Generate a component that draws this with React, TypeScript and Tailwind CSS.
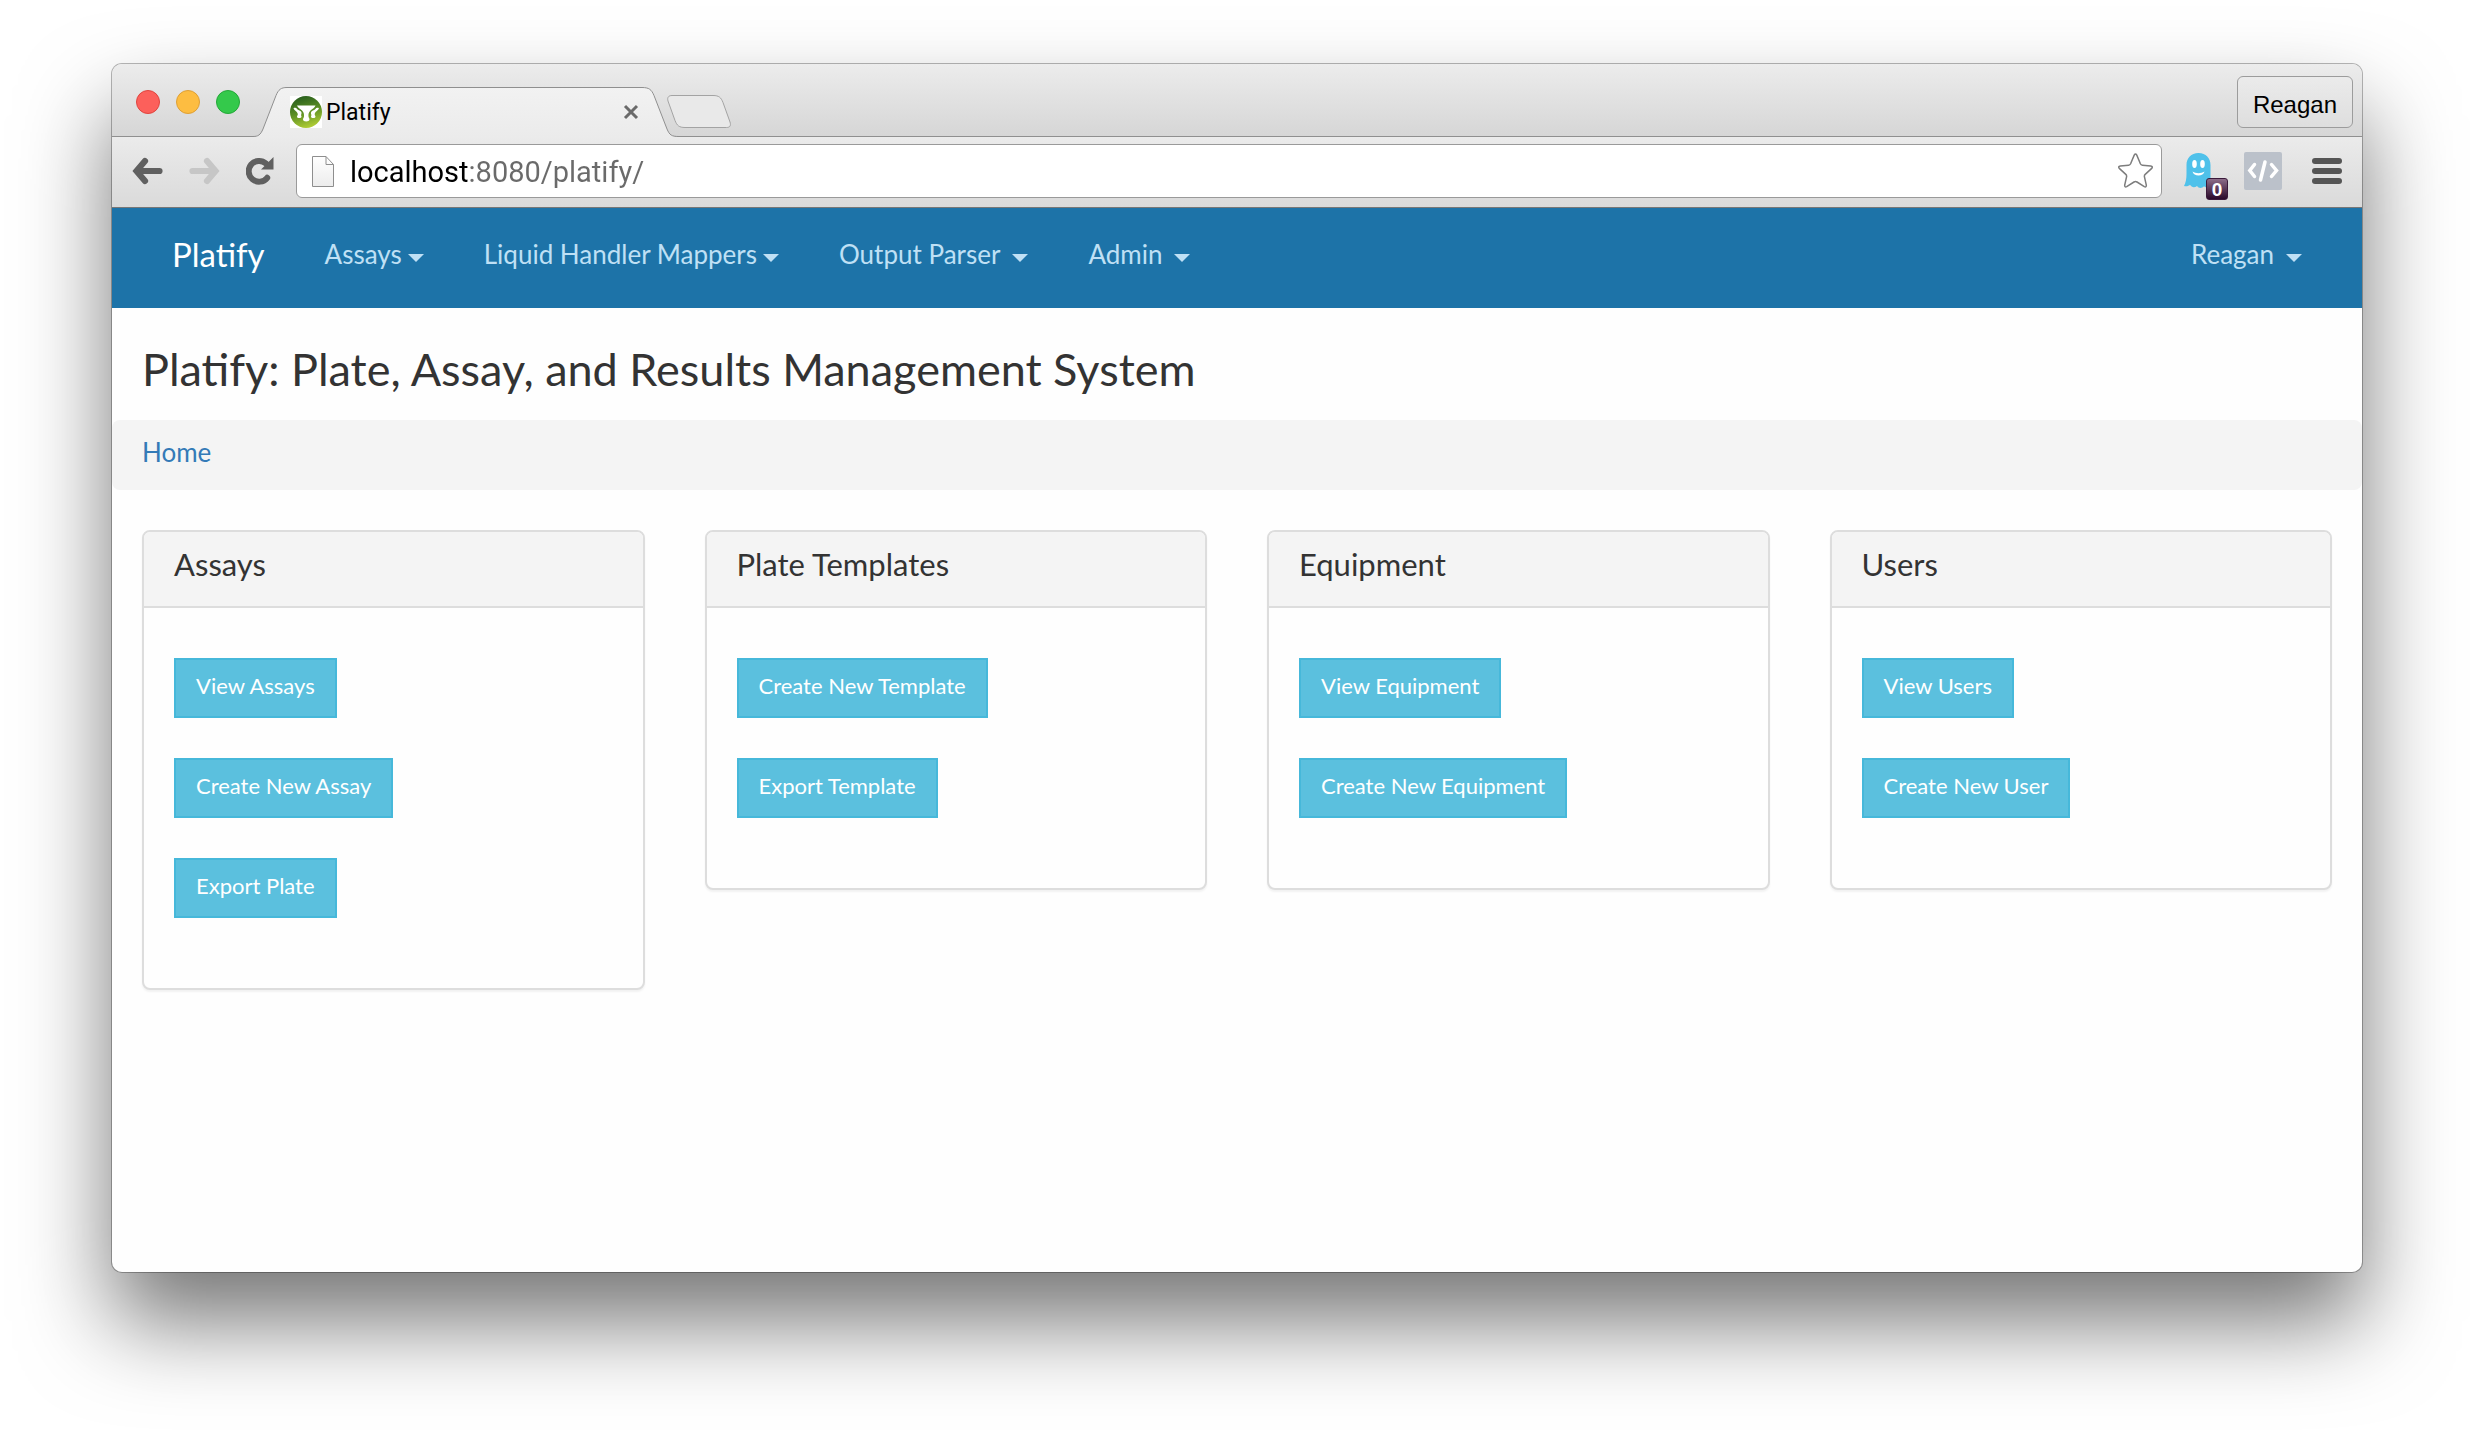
type NavItem = { label: string; tight?: boolean };

const navItems: NavItem[] = [
  { label: 'Assays', tight: true },
  { label: 'Liquid Handler Mappers', tight: true },
  { label: 'Output Parser' },
  { label: 'Admin' },
];

const panels = [
  { title: 'Assays', actions: ['View Assays', 'Create New Assay', 'Export Plate'] },
  { title: 'Plate Templates', actions: ['Create New Template', 'Export Template'] },
  { title: 'Equipment', actions: ['View Equipment', 'Create New Equipment'] },
  { title: 'Users', actions: ['View Users', 'Create New User'] },
];

function Favicon() {
  return (
    <svg width="32" height="32" viewBox="0 0 32 32" className="shrink-0 bg-white" aria-hidden="true">
      <defs>
        <linearGradient id="leaf" x1="0.3" y1="0" x2="0.6" y2="1">
          <stop offset="0" stopColor="#265c1d" />
          <stop offset="0.5" stopColor="#5c8f24" />
          <stop offset="1" stopColor="#b3cf35" />
        </linearGradient>
      </defs>
      <circle cx="16" cy="16" r="16" fill="url(#leaf)" />
      <g fill="#fff">
        <path d="M7 9.500h18.500c-.8 2.200-3 3.300-5 5-1.500 1.300-2.300 3.500-2 6 .2 1.500 1 1.700 1 3 0 1.200-1.500 2-3.250 2s-3.250-.8-3.250-2c0-1.300.8-1.500 1-3 .3-2.500-.5-4.700-2-6C10 12.800 7.800 11.700 7 9.500z" />
        <path d="M3.500 12.300c1.500-.8 2.800-.5 3.600.7.900 1.200 2.700 1.300 3.900 2.500.8.800.6 2 .2 3-.3 1 .3 1.500.3 2.200 0 .8-1 1.300-2.300 1.300S7 21.500 7 20.700c0-.9.9-1.200.8-2.400C7.500 15.500 4.500 15 3.500 12.300z" />
        <path d="M29 12.300c-1.500-.8-2.800-.5-3.600.7-.9 1.200-2.700 1.300-3.900 2.500-.8.800-.6 2-.2 3 .3 1-.3 1.500-.3 2.200 0 .8 1 1.300 2.300 1.300s2.200-.5 2.200-1.300c0-.9-.9-1.200-.8-2.400.3-2.800 3.300-3.300 4.200-6z" />
      </g>
    </svg>
  );
}

function Tab() {
  return (
    <div className="relative -mb-px h-[50px] w-[426px] shrink-0">
      <svg viewBox="0 0 426 50" className="absolute inset-0 h-full w-full" aria-hidden="true">
        <defs>
          <linearGradient id="tabFill" x1="0" y1="0" x2="0" y2="1">
            <stop offset="0" stopColor="#f2f2f2" />
            <stop offset="1" stopColor="#ebebeb" />
          </linearGradient>
        </defs>
        <path
          d="M0 50v-.5c5 0 7.500-1.500 10-7.500L23 8.500C25.500 2.500 28 .5 34 .5H389c7 0 9.500 2 12 8L414 42c2.500 6 4.500 7.500 12 7.500v.5z"
          fill="url(#tabFill)"
        />
        <path
          d="M0 49.500c5 0 7.500-1.500 10-7.500L23 8.500C25.500 2.500 28 .5 34 .5H389c7 0 9.500 2 12 8L414 42c2.500 6 4.500 7.500 12 7.500"
          fill="none"
          stroke="#8f8f8f"
        />
      </svg>
      <div className="relative flex h-full items-center pr-10 pl-[37px]">
        <Favicon />
        <span className="ml-1 flex-1 pt-[2px] font-[Roboto,sans-serif] text-[23px] leading-7 text-black">Platify</span>
        <button type="button" aria-label="Close tab">
          <svg width="16" height="16" viewBox="0 0 16 16" aria-hidden="true">
            <path d="M2 2l12 12M14 2L2 14" stroke="#6a6a6a" strokeWidth="3" />
          </svg>
        </button>
      </div>
    </div>
  );
}

function NewTabShape() {
  return (
    <svg width="64" height="33" viewBox="0 0 64 33" aria-hidden="true">
      <path
        d="M5 .5H46c6 0 8 2 10 7L63 27c1.200 3.500 0 5.500-3.500 5.500H18c-6 0-8-2-10-7L1 6C0 2.500 1.500.5 5 .5z"
        fill="#e9e9e9"
        stroke="#a3a3a3"
      />
    </svg>
  );
}

function Arrow({ color, flip }: { color: string; flip?: boolean }) {
  return (
    <svg width="32" height="28" viewBox="0 0 32 28" className={flip ? 'rotate-180' : ''} aria-hidden="true">
      <path
        d="M13 4L4.500 14l8.500 10M7 14h20.500"
        fill="none"
        stroke={color}
        strokeWidth="6.200"
        strokeLinecap="round"
        strokeLinejoin="miter"
      />
    </svg>
  );
}

function Reload() {
  return (
    <svg width="28" height="28" viewBox="0 0 28 28" aria-hidden="true">
      <path
        d="M20 6.500A10.400 10.400 0 1 0 21.200 20.800"
        fill="none"
        stroke="#606060"
        strokeWidth="6"
        strokeLinecap="round"
      />
      <path d="M27.500 0v12.500H15z" fill="#606060" />
    </svg>
  );
}

function PageIcon() {
  return (
    <svg width="22" height="31" viewBox="0 0 22 31" className="shrink-0" aria-hidden="true">
      <defs>
        <linearGradient id="sheet" x1="0" y1="0" x2="0" y2="1">
          <stop offset="0" stopColor="#fff" />
          <stop offset="1" stopColor="#ececec" />
        </linearGradient>
      </defs>
      <path d="M.5 .5H14l7.500 8v22H.5z" fill="url(#sheet)" stroke="#8e8e8e" />
      <path d="M14 .5v8h7.500" fill="none" stroke="#8e8e8e" />
    </svg>
  );
}

function BookmarkStar() {
  return (
    <svg width="36" height="36" viewBox="0 0 36 36" aria-hidden="true">
      <path
        d="M16.200 2.200q1.300-2.200 2.600 0l3.600 8.600q.6 1.300 2 1.400l8.300.8q2.600.5 1 2.400l-6.500 6q-1 .9-.8 2.200l1.900 8.500q.2 2.500-2 1.500l-7.300-4.600q-1.500-.9-3 0l-7.300 4.600q-2.200 1-2-1.500l1.900-8.500q.2-1.300-.8-2.200l-6.500-6q-1.600-1.900 1-2.400l8.300-.8q1.400-.1 2-1.400z"
        fill="none"
        stroke="#7d7d7d"
        strokeWidth="1.500"
      />
    </svg>
  );
}

function Ghost() {
  return (
    <svg width="28" height="36" viewBox="0 0 28 36" aria-hidden="true">
      <path
        d="M14.500 0C7 0 2.500 5 2.500 12v9c0 5-.8 9-2.500 12 2.500.6 4.500.2 6-1.200 1.500 2.400 4.300 3.400 7 1.200 1.700 2.500 5 2.500 7 .2 1.800 1.600 4 1.600 6.500.8V12C26.500 5 22 0 14.500 0z"
        fill="#4fc1ea"
      />
      <ellipse cx="10.500" cy="11" rx="2.300" ry="4" fill="#fff" />
      <ellipse cx="18.500" cy="11" rx="2.300" ry="4" fill="#fff" />
      <path d="M8.500 18.500c3.500 2.300 8.500 2.300 12 0-1 5.300-11 5.300-12 0z" fill="#fff" />
    </svg>
  );
}

function Caret() {
  return (
    <svg width="16" height="8" viewBox="0 0 16 8" className="mt-2" aria-hidden="true">
      <path d="M0 0h16L8 8z" fill="currentColor" />
    </svg>
  );
}

function MenuButton({ label, tight }: NavItem) {
  return (
    <button
      type="button"
      aria-haspopup="menu"
      className={`flex items-center text-[26px] leading-10 whitespace-nowrap text-[#bfe0f5] ${tight ? 'gap-[6px]' : 'gap-3'}`}
    >
      {label}
      <Caret />
    </button>
  );
}

function TabStrip() {
  return (
    <div className="flex h-[73px] items-end border-b border-[#8f8f8f] bg-linear-to-b from-[#ececec] to-[#d6d6d6] pl-6">
      <div className="flex gap-4 self-start pt-[26px]">
        <button type="button" aria-label="Close" className="size-6 rounded-full border border-[#e0443e] bg-[#fc605b]" />
        <button type="button" aria-label="Minimize" className="size-6 rounded-full border border-[#dfa035] bg-[#fdbd41]" />
        <button type="button" aria-label="Zoom" className="size-6 rounded-full border border-[#24a838] bg-[#34c94b]" />
      </div>
      <div className="ml-[13px] flex items-end">
        <Tab />
        <button type="button" aria-label="New tab" className="-ml-3 pb-2">
          <NewTabShape />
        </button>
      </div>
      <button
        type="button"
        className="mt-3 mr-[9px] ml-auto self-start rounded-md border border-[#9c9c9c] bg-linear-to-b from-[#ebebeb] to-[#dedede] px-[15px] pt-3 pb-[6px] font-['Liberation_Sans',sans-serif] text-[24px] leading-8 text-black"
      >
        Reagan
      </button>
    </div>
  );
}

function Toolbar() {
  return (
    <div className="flex items-center border-b border-[#777] bg-linear-to-b from-[#ebebeb] to-[#dadada] pt-[7px] pr-5 pb-[9px] pl-5">
      <div className="flex items-center gap-6">
        <button type="button" aria-label="Back">
          <Arrow color="#606060" />
        </button>
        <button type="button" aria-label="Forward">
          <Arrow color="#c6c6c6" flip />
        </button>
        <button type="button" aria-label="Reload" className="flex w-8 justify-center">
          <Reload />
        </button>
      </div>
      <div className="ml-5 flex h-[54px] flex-1 items-center rounded-md border border-[#9a9a9a] bg-white pr-[7px] pl-[15px]">
        <PageIcon />
        <input
          type="text"
          aria-label="Address"
          defaultValue="localhost:8080/platify/"
          className="ml-4 flex-1 bg-[linear-gradient(to_right,#000_118px,#6a6a6a_118px)] bg-clip-text pt-[2px] font-[Roboto,sans-serif] text-[29px] leading-10 text-transparent caret-black outline-none"
        />
        <button type="button" aria-label="Bookmark this page">
          <BookmarkStar />
        </button>
      </div>
      <div className="ml-[22px] flex items-center gap-4">
        <button type="button" aria-label="Ghost extension, 0 found" className="relative w-11">
          <Ghost />
          <span className="absolute right-0 -bottom-[11px] flex size-[22px] items-center justify-center rounded-[3px] border border-[#3a1a3a] bg-linear-to-b from-[#8d6d89] to-[#2b0a2b] font-['Liberation_Sans',sans-serif] text-[19px] leading-none font-bold text-white">
            0
          </span>
        </button>
        <button type="button" aria-label="View source" className="rounded-[2px] bg-[#bbc1ca]">
          <svg width="38" height="38" viewBox="0 0 38 38" fill="none" stroke="#fff" strokeWidth="3.500" strokeLinecap="round" aria-hidden="true">
            <path d="M10.500 12.500L5.800 18.500l4.700 6M27.500 12.500l5 6-5 6M21 10l-4.500 18" />
          </svg>
        </button>
      </div>
      <button type="button" aria-label="Menu" className="ml-[30px] flex w-[30px] flex-col gap-1">
        <span className="h-[6px] rounded-[3px] bg-[#555]" />
        <span className="h-[6px] rounded-[3px] bg-[#555]" />
        <span className="h-[6px] rounded-[3px] bg-[#555]" />
      </button>
    </div>
  );
}

function Panel({ title, actions }: { title: string; actions: string[] }) {
  return (
    <section className="overflow-hidden rounded-lg border-2 border-[#ddd] bg-[#fefefe] shadow-[0_2px_2px_rgba(0,0,0,0.05)]">
      <h2 className="border-b-2 border-[#ddd] bg-[#f4f4f4] px-[30px] pt-3 pb-[22px] text-[31px] leading-10 text-[#333]">
        {title}
      </h2>
      <div className="flex flex-col items-start gap-10 px-[30px] pt-[50px] pb-[70px]">
        {actions.map((action) => (
          <button
            key={action}
            type="button"
            className="border-2 border-[#46b8da] bg-[#5bc0de] px-5 pt-[10px] pb-[14px] text-[22px] leading-8 whitespace-nowrap text-white"
          >
            {action}
          </button>
        ))}
      </div>
    </section>
  );
}

export default function App() {
  return (
    <div className="flex min-h-screen flex-col bg-white px-28 pt-16 pb-40 font-[Lato,sans-serif]">
      <div className="flex flex-1 flex-col overflow-hidden rounded-[10px] bg-[#fefefe] shadow-[0_0_0_1px_rgba(0,0,0,0.28),0_50px_90px_rgba(0,0,0,0.54)]">
        <TabStrip />
        <Toolbar />
        <nav className="flex items-center gap-[60px] bg-[#1d73a8] px-[60px] pt-[26px] pb-[34px]">
          <a href="#" className="text-[33px] leading-10 text-white">
            Platify
          </a>
          {navItems.map((item) => (
            <MenuButton key={item.label} label={item.label} tight={item.tight} />
          ))}
          <div className="ml-auto">
            <MenuButton label="Reagan" />
          </div>
        </nav>
        <main>
          <h1 className="px-[30px] pt-[31px] pb-[21px] text-[45px] leading-[60px] text-[#333]">
            Platify: Plate, Assay, and Results Management System
          </h1>
          <nav aria-label="Breadcrumb" className="rounded-lg bg-[#f4f4f4] px-[30px] pt-3 pb-[18px] text-[26px] leading-10">
            <a href="#" className="text-[#337ab7]">
              Home
            </a>
          </nav>
          <div className="mt-10 grid grid-cols-4 items-start gap-[60px] px-[30px]">
            {panels.map((panel) => (
              <Panel key={panel.title} title={panel.title} actions={panel.actions} />
            ))}
          </div>
        </main>
      </div>
    </div>
  );
}
